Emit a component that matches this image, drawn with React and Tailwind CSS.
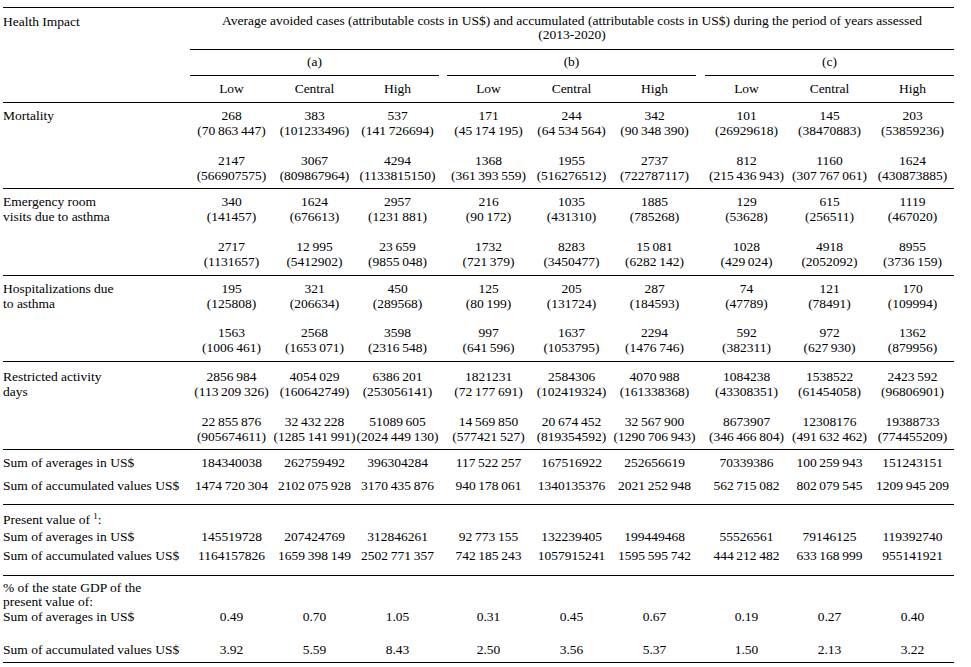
import React from 'react';

const GRID = 'grid grid-cols-[187px_83px_83px_83px_8px_83px_83px_83px_9px_83px_83px_83px]';
const t = (s) => s.replace(/ /g, '\u2009');

const Nine = ({ vals, cellClass }) => {
  const out = [];
  vals.forEach((v, i) => {
    if (i === 3 || i === 6) out.push(<div key={'s' + i} />);
    out.push(<div key={i} className={cellClass}>{v}</div>);
  });
  return out;
};

const sections = [
  {
    label: ['Mortality'], h: 'h-[86px]', pt: 'pt-[5px]', gap: 'mt-[15px]',
    cells: [
      ['268', '(70 863 447)', '2147', '(566907575)'],
      ['383', '(101233496)', '3067', '(809867964)'],
      ['537', '(141 726694)', '4294', '(1133815150)'],
      ['171', '(45 174 195)', '1368', '(361 393 559)'],
      ['244', '(64 534 564)', '1955', '(516276512)'],
      ['342', '(90 348 390)', '2737', '(722787117)'],
      ['101', '(26929618)', '812', '(215 436 943)'],
      ['145', '(38470883)', '1160', '(307 767 061)'],
      ['203', '(53859236)', '1624', '(430873885)'],
    ],
  },
  {
    label: ['Emergency room', 'visits due to asthma'], h: 'h-[87px]', pt: 'pt-[5px]', gap: 'mt-[15px]',
    cells: [
      ['340', '(141457)', '2717', '(1131657)'],
      ['1624', '(676613)', '12 995', '(5412902)'],
      ['2957', '(1231 881)', '23 659', '(9855 048)'],
      ['216', '(90 172)', '1732', '(721 379)'],
      ['1035', '(431310)', '8283', '(3450477)'],
      ['1885', '(785268)', '15 081', '(6282 142)'],
      ['129', '(53628)', '1028', '(429 024)'],
      ['615', '(256511)', '4918', '(2052092)'],
      ['1119', '(467020)', '8955', '(3736 159)'],
    ],
  },
  {
    label: ['Hospitalizations due', 'to asthma'], h: 'h-[86px]', pt: 'pt-[5px]', gap: 'mt-[14px]',
    cells: [
      ['195', '(125808)', '1563', '(1006 461)'],
      ['321', '(206634)', '2568', '(1653 071)'],
      ['450', '(289568)', '3598', '(2316 548)'],
      ['125', '(80 199)', '997', '(641 596)'],
      ['205', '(131724)', '1637', '(1053795)'],
      ['287', '(184593)', '2294', '(1476 746)'],
      ['74', '(47789)', '592', '(382311)'],
      ['121', '(78491)', '972', '(627 930)'],
      ['170', '(109994)', '1362', '(879956)'],
    ],
  },
  {
    label: ['Restricted activity', 'days'], h: 'h-[88px]', pt: 'pt-[7px]', gap: 'mt-[15px]',
    cells: [
      ['2856 984', '(113 209 326)', '22 855 876', '(905674611)'],
      ['4054 029', '(160642749)', '32 432 228', '(1285 141 991)'],
      ['6386 201', '(253056141)', '51089 605', '(2024 449 130)'],
      ['1821231', '(72 177 691)', '14 569 850', '(577421 527)'],
      ['2584306', '(102419324)', '20 674 452', '(819354592)'],
      ['4070 988', '(161338368)', '32 567 900', '(1290 706 943)'],
      ['1084238', '(43308351)', '8673907', '(346 466 804)'],
      ['1538522', '(61454058)', '12308176', '(491 632 462)'],
      ['2423 592', '(96806901)', '19388733', '(774455209)'],
    ],
  },
];

const sumAvg = ['184340038', '262759492', '396304284', '117 522 257', '167516922', '252656619', '70339386', '100 259 943', '151243151'];
const sumAcc = ['1474 720 304', '2102 075 928', '3170 435 876', '940 178 061', '1340135376', '2021 252 948', '562 715 082', '802 079 545', '1209 945 209'];
const pvAvg = ['145519728', '207424769', '312846261', '92 773 155', '132239405', '199449468', '55526561', '79146125', '119392740'];
const pvAcc = ['1164157826', '1659 398 149', '2502 771 357', '742 185 243', '1057915241', '1595 595 742', '444 212 482', '633 168 999', '955141921'];
const gdpAvg = ['0.49', '0.70', '1.05', '0.31', '0.45', '0.67', '0.19', '0.27', '0.40'];
const gdpAcc = ['3.92', '5.59', '8.43', '2.50', '3.56', '5.37', '1.50', '2.13', '3.22'];

const num = 'text-center whitespace-nowrap';

const Line = ({ label, vals, className = '' }) => (
  <div className={`${GRID} leading-[15px] ${className}`}>
    <div className="whitespace-nowrap">{label}</div>
    <Nine vals={vals.map(t)} cellClass={num} />
  </div>
);

export default function App() {
  return (
    <div className="w-[971px] h-[667px] bg-white text-black text-[13.5px] font-['Liberation_Serif',serif]">
      <div className="ml-[3px] pt-[7px] w-[951px]">
        <div className="border-t border-black">
          <div className={`${GRID} h-[42px]`}>
            <div className="pt-[6px] leading-[15px]">Health Impact</div>
            <div className="col-span-11 border-b border-black text-center leading-[14px] pt-[6px]">
              Average avoided cases (attributable costs in US$) and accumulated (attributable costs in US$) during the period of years assessed
              <br />
              (2013-2020)
            </div>
          </div>
          <div className={`${GRID} h-[26px]`}>
            <div />
            <div className="col-span-3 border-b border-black flex items-center justify-center">(a)</div>
            <div />
            <div className="col-span-3 border-b border-black flex items-center justify-center">(b)</div>
            <div />
            <div className="col-span-3 border-b border-black flex items-center justify-center">(c)</div>
          </div>
          <div className={`${GRID} h-[27px] items-center border-b border-black`}>
            <div />
            <Nine vals={['Low', 'Central', 'High', 'Low', 'Central', 'High', 'Low', 'Central', 'High']} cellClass="text-center" />
          </div>
        </div>

        {sections.map((s) => (
          <div key={s.label[0]} className={`${GRID} ${s.h} ${s.pt} border-b border-black leading-[15px]`}>
            <div>
              {s.label.map((l) => (
                <div key={l}>{l}</div>
              ))}
            </div>
            <Nine
              vals={s.cells.map((c) => (
                <>
                  <div>{t(c[0])}</div>
                  <div>{t(c[1])}</div>
                  <div className={s.gap}>{t(c[2])}</div>
                  <div>{t(c[3])}</div>
                </>
              ))}
              cellClass={num}
            />
          </div>
        ))}

        <div className="h-[55px] pt-[5px] border-b border-black">
          <Line label="Sum of averages in US$" vals={sumAvg} />
          <Line label="Sum of accumulated values US$" vals={sumAcc} className="mt-[8px]" />
        </div>

        <div className="h-[71px] pt-[7px] border-b border-black">
          <div className="leading-[15px]">
            Present value of <span className="relative -top-[5px] text-[9px]">1</span>:
          </div>
          <Line label="Sum of averages in US$" vals={pvAvg} />
          <Line label="Sum of accumulated values US$" vals={pvAcc} className="mt-[4px]" />
        </div>

        <div className="h-[87px] pt-[5px] border-b border-black">
          <div className="leading-[14px]">
            <div>% of the state GDP of the</div>
            <div>present value of:</div>
          </div>
          <Line label="Sum of averages in US$" vals={gdpAvg} />
          <Line label="Sum of accumulated values US$" vals={gdpAcc} className="mt-[18px]" />
        </div>
      </div>
    </div>
  );
}
